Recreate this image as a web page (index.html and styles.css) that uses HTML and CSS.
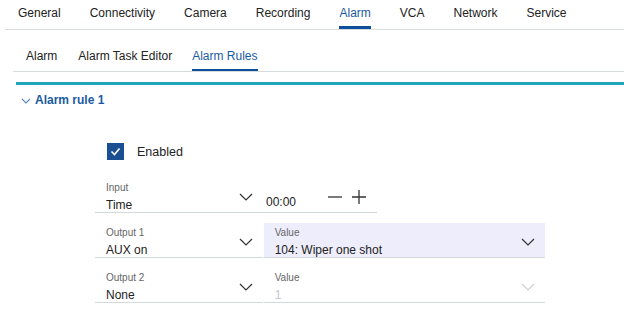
FILE: index.html
```html
<!DOCTYPE html>
<html lang="en">
<head>
    <meta charset="UTF-8">
    <title>Alarm Rules</title>
    <link rel="stylesheet" href="styles.css">
</head>
<body>
    <!-- Main tabs -->
    <nav class="main-tabs">
        <a class="tab">General</a>
        <a class="tab">Connectivity</a>
        <a class="tab">Camera</a>
        <a class="tab">Recording</a>
        <a class="tab active">Alarm</a>
        <a class="tab">VCA</a>
        <a class="tab">Network</a>
        <a class="tab">Service</a>
    </nav>

    <!-- Sub tabs -->
    <nav class="sub-tabs">
        <a class="sub-tab">Alarm</a>
        <a class="sub-tab">Alarm Task Editor</a>
        <a class="sub-tab active">Alarm Rules</a>
    </nav>

    <div class="rule-panel">
        <div class="rule-header">
            <svg class="rule-chevron" width="10" height="6" viewBox="0 0 10 6"><path d="M1 1l4 4 4-4" fill="none" stroke="#5b86b8" stroke-width="1.1"/></svg>
            <span>Alarm rule 1</span>
        </div>

        <div class="rule-form">
            <label class="check-row">
                <span class="checkbox">
                    <svg width="11" height="9" viewBox="0 0 11 9"><path d="M1.5 4.5l3 3 5-6" fill="none" stroke="#fff" stroke-width="1.6"/></svg>
                </span>
                Enabled
            </label>

            <div class="field-row">
                <div class="field">
                    <div class="field-label">Input</div>
                    <div class="field-value">Time</div>
                    <svg class="chevron" width="14" height="8" viewBox="0 0 14 8"><path d="M1 1l6 6 6-6" fill="none" stroke="#333" stroke-width="1.2"/></svg>
                </div>
                <div class="time-field">
                    <span class="time-value">00:00</span>
                    <span class="stepper">
                        <svg width="14" height="14" viewBox="0 0 14 14"><path d="M0 7h14" stroke="#333" stroke-width="1.3"/></svg>
                        <svg width="14" height="14" viewBox="0 0 14 14"><path d="M0 7h14M7 0v14" stroke="#333" stroke-width="1.3"/></svg>
                    </span>
                </div>
            </div>

            <div class="field-row">
                <div class="field">
                    <div class="field-label">Output 1</div>
                    <div class="field-value">AUX on</div>
                    <svg class="chevron" width="14" height="8" viewBox="0 0 14 8"><path d="M1 1l6 6 6-6" fill="none" stroke="#333" stroke-width="1.2"/></svg>
                </div>
                <div class="field wide highlighted">
                    <div class="field-label">Value</div>
                    <div class="field-value">104: Wiper one shot</div>
                    <svg class="chevron" width="14" height="8" viewBox="0 0 14 8"><path d="M1 1l6 6 6-6" fill="none" stroke="#333" stroke-width="1.2"/></svg>
                </div>
            </div>

            <div class="field-row">
                <div class="field">
                    <div class="field-label">Output 2</div>
                    <div class="field-value">None</div>
                    <svg class="chevron" width="14" height="8" viewBox="0 0 14 8"><path d="M1 1l6 6 6-6" fill="none" stroke="#333" stroke-width="1.2"/></svg>
                </div>
                <div class="field wide disabled">
                    <div class="field-label">Value</div>
                    <div class="field-value">1</div>
                    <svg class="chevron" width="14" height="8" viewBox="0 0 14 8"><path d="M1 1l6 6 6-6" fill="none" stroke="#c9d0d4" stroke-width="1.2"/></svg>
                </div>
            </div>
        </div>
    </div>
</body>
</html>
```

FILE: styles.css
```css
body {
    margin: 0;
    font-family: "Liberation Sans", Arial, sans-serif;
    font-size: 12px;
    color: #222;
    background: #fff;
}
.main-tabs {
    display: flex;
    gap: 29px;
    height: 29px;
    margin-left: 5px;
    padding-left: 13px;
    border-bottom: 1px solid #d6dcde;
}
.tab {
    display: flex;
    align-items: center;
    height: 26px;
    border-bottom: 3px solid transparent;
    cursor: pointer;
}
.tab.active {
    color: #1b5aa0;
    border-bottom-color: #0d4f9c;
}
.sub-tabs {
    display: flex;
    gap: 20px;
    height: 41px;
    margin-left: 13px;
    padding-left: 13px;
    border-bottom: 1px solid #d6dcde;
}
.sub-tab {
    display: flex;
    align-items: center;
    padding-top: 12px;
    height: 27px;
    border-bottom: 2px solid transparent;
    cursor: pointer;
}
.sub-tab:first-child {
    margin-right: 1px;
}
.sub-tab.active {
    color: #1b5aa0;
    border-bottom-color: #0d4f9c;
}
.rule-panel {
    margin: 10px 0 0 16px;
    border-top: 3px solid #1fa6b8;
}
.rule-header {
    display: flex;
    align-items: center;
    gap: 4px;
    height: 30px;
    padding-left: 5px;
    font-weight: bold;
    color: #1b5aa0;
}
.rule-chevron {
    margin-top: 1px;
}
.rule-form {
    padding: 28px 0 0 79px;
    width: 450px;
}
.check-row {
    display: flex;
    align-items: center;
    gap: 13px;
    height: 17px;
    margin-left: 12px;
    font-size: 12.5px;
}
.checkbox {
    display: flex;
    align-items: center;
    justify-content: center;
    width: 17px;
    height: 17px;
    background: #1a4f93;
}
.field-row {
    display: flex;
    margin-top: 18px;
}
.field-row + .field-row {
    margin-top: 10px;
}
.field {
    position: relative;
    width: 157px;
    height: 34px;
    padding-left: 11px;
    border-bottom: 1px solid #d2dadc;
}
.field.wide {
    width: 271px;
    margin-left: 1px;
}
.field.highlighted {
    background: #eeedfb;
}
.field-label {
    padding-top: 4px;
    font-size: 10px;
    line-height: 12px;
    color: #666;
}
.field-value {
    margin-top: 3px;
    font-size: 12px;
    line-height: 16px;
}
.field.disabled .field-value {
    color: #c3c9cc;
}
.chevron {
    position: absolute;
    right: 10px;
    top: 15px;
}
.time-field {
    display: flex;
    align-items: flex-end;
    width: 114px;
    height: 34px;
    border-bottom: 1px solid #d2dadc;
}
.time-value {
    margin: 0 0 3px 3px;
}
.stepper {
    display: flex;
    gap: 10px;
    margin: 0 0 8px 32px;
}
```
